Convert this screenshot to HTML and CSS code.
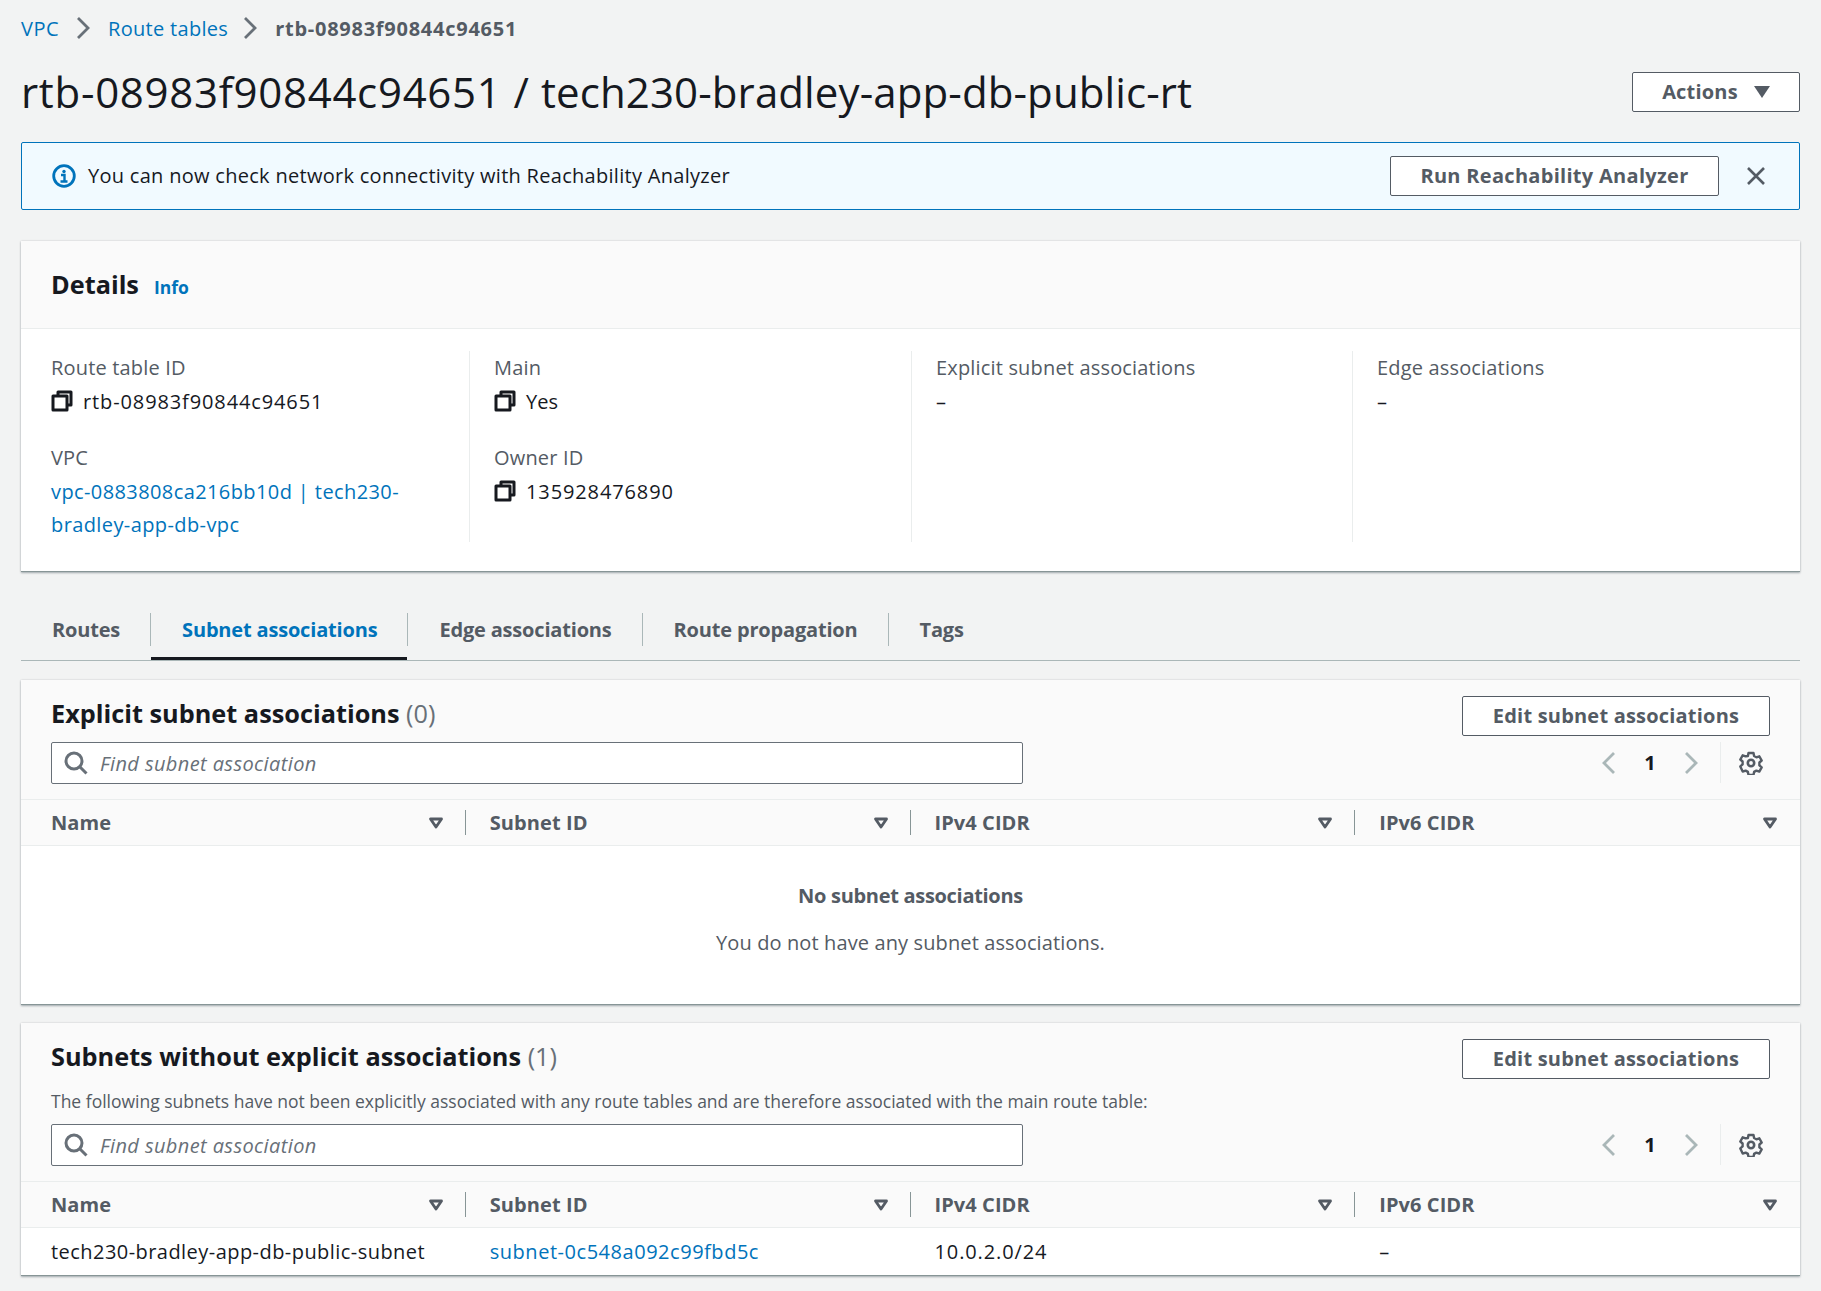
FILE: index.html
```html
<!doctype html>
<html>
  <head>
    <meta charset="utf-8">
    <title>rtb-08983f90844c94651</title>
    <link rel="stylesheet" href="styles.css">
  </head>
  <body>
    <svg class="defs" width="0" height="0">
      <symbol id="copy" viewBox="0 0 22 22"><path d="M7 5V2h13v13h-4M2 6h14v14H2z" fill="none" stroke="currentColor" stroke-width="3" stroke-linejoin="round"/></symbol>
      <symbol id="chev" viewBox="0 0 16 24"><path d="M3 2l10 10L3 22" fill="none" stroke="currentColor" stroke-width="2.800"/></symbol>
      <symbol id="sort" viewBox="0 0 16 12"><path d="M2.500 2h11L8 10z" fill="none" stroke="currentColor" stroke-width="2.800" stroke-linejoin="round"/></symbol>
      <symbol id="search" viewBox="0 0 24 24"><circle cx="10" cy="10" r="8" fill="none" stroke="currentColor" stroke-width="3"/><path d="M15.500 15.500L22.500 22.500" stroke="currentColor" stroke-width="3"/></symbol>
      <symbol id="gear" viewBox="0 0 24 24"><path d="M9.500 2h5l.6 3 2.300 1.300 2.900-1 2.400 4.200-2.300 2v2.900l2.300 2-2.400 4.200-2.900-1-2.300 1.300-.6 3h-5l-.6-3-2.300-1.300-2.900 1L1.300 15.400l2.300-2v-2.900l-2.300-2L3.700 4.300l2.900 1L8.900 5z" fill="none" stroke="currentColor" stroke-width="2.400" stroke-linejoin="round"/><circle cx="12" cy="12" r="3.200" fill="none" stroke="currentColor" stroke-width="2.600"/></symbol>
    </svg>

    <nav class="crumbs">
      <a href="#" class="crumb-vpc">VPC</a>
      <svg class="crumb-sep"><use href="#chev"/></svg>
      <a href="#" class="crumb-link">Route tables</a>
      <svg class="crumb-sep"><use href="#chev"/></svg>
      <span class="crumb-current">rtb-08983f90844c94651</span>
    </nav>

    <header class="page-head">
      <h1><span class="title-id">rtb-08983f90844c94651</span> / tech230-bradley-app-db-public-rt</h1>
      <button class="btn btn-actions">Actions <svg viewBox="0 0 16 12"><path d="M0 0h16L8 12z" fill="currentColor"/></svg></button>
    </header>

    <div class="alert">
      <svg class="alert-icon" viewBox="0 0 24 24"><circle cx="12" cy="12" r="10.300" fill="none" stroke="currentColor" stroke-width="2.800"/><circle cx="12" cy="7.500" r="1.700" fill="currentColor"/><path d="M9 11h3.500v6M8.500 17.500h7" fill="none" stroke="currentColor" stroke-width="2.400"/></svg>
      <span class="alert-text">You can now check network connectivity with Reachability Analyzer</span>
      <button class="btn btn-run">Run Reachability Analyzer</button>
      <svg class="alert-close" viewBox="0 0 20 20"><path d="M2 2l16 16M18 2L2 18" stroke="currentColor" stroke-width="2.600"/></svg>
    </div>

    <section class="card details">
      <div class="details-head"><h2>Details</h2><a href="#" class="info">Info</a></div>
      <div class="details-grid">
        <div class="col col-first">
          <div class="label">Route table ID</div>
          <div class="value"><svg class="copy"><use href="#copy"/></svg><span class="id">rtb-08983f90844c94651</span></div>
          <div class="label label-next">VPC</div>
          <div class="value"><a href="#" class="vpc-link">vpc-0883808ca216bb10d | tech230-bradley-app-db-vpc</a></div>
        </div>
        <div class="col">
          <div class="label">Main</div>
          <div class="value"><svg class="copy"><use href="#copy"/></svg>Yes</div>
          <div class="label label-next">Owner ID</div>
          <div class="value"><svg class="copy"><use href="#copy"/></svg><span class="id">135928476890</span></div>
        </div>
        <div class="col">
          <div class="label">Explicit subnet associations</div>
          <div class="value">–</div>
        </div>
        <div class="col">
          <div class="label">Edge associations</div>
          <div class="value">–</div>
        </div>
      </div>
    </section>

    <div class="tabs">
      <a class="tab" href="#">Routes</a>
      <a class="tab tab-active" href="#">Subnet associations</a>
      <a class="tab" href="#">Edge associations</a>
      <a class="tab" href="#">Route propagation</a>
      <a class="tab" href="#">Tags</a>
    </div>

    <section class="card assoc assoc-explicit">
      <div class="assoc-head">
        <div class="assoc-left">
          <h2>Explicit subnet associations <span class="count">(0)</span></h2>
          <div class="search"><svg><use href="#search"/></svg><span>Find subnet association</span></div>
        </div>
        <div class="assoc-right">
          <button class="btn btn-edit">Edit subnet associations</button>
          <div class="pager">
            <svg class="prev"><use href="#chev"/></svg>
            <span class="page-num">1</span>
            <svg class="next"><use href="#chev"/></svg>
            <span class="pager-sep"></span>
            <svg class="gear"><use href="#gear"/></svg>
          </div>
        </div>
      </div>
      <div class="thead">
        <div class="th">Name<svg><use href="#sort"/></svg></div>
        <div class="th">Subnet ID<svg><use href="#sort"/></svg></div>
        <div class="th">IPv4 CIDR<svg><use href="#sort"/></svg></div>
        <div class="th">IPv6 CIDR<svg><use href="#sort"/></svg></div>
      </div>
      <div class="empty">
        <strong>No subnet associations</strong>
        <p>You do not have any subnet associations.</p>
      </div>
    </section>

    <section class="card assoc assoc-implicit">
      <div class="assoc-head">
        <div class="assoc-left">
          <h2>Subnets without explicit associations <span class="count">(1)</span></h2>
          <p class="desc">The following subnets have not been explicitly associated with any route tables and are therefore associated with the main route table:</p>
          <div class="search"><svg><use href="#search"/></svg><span>Find subnet association</span></div>
        </div>
        <div class="assoc-right">
          <button class="btn btn-edit">Edit subnet associations</button>
          <div class="pager">
            <svg class="prev"><use href="#chev"/></svg>
            <span class="page-num">1</span>
            <svg class="next"><use href="#chev"/></svg>
            <span class="pager-sep"></span>
            <svg class="gear"><use href="#gear"/></svg>
          </div>
        </div>
      </div>
      <div class="thead">
        <div class="th">Name<svg><use href="#sort"/></svg></div>
        <div class="th">Subnet ID<svg><use href="#sort"/></svg></div>
        <div class="th">IPv4 CIDR<svg><use href="#sort"/></svg></div>
        <div class="th">IPv6 CIDR<svg><use href="#sort"/></svg></div>
      </div>
      <div class="tr">
        <div class="td td-name">tech230-bradley-app-db-public-subnet</div>
        <div class="td"><a href="#" class="subnet-link">subnet-0c548a092c99fbd5c</a></div>
        <div class="td id">10.0.2.0/24</div>
        <div class="td">–</div>
      </div>
    </section>
  </body>
</html>
```

FILE: styles.css
```css
* { box-sizing: border-box; }
html, body { margin: 0; }
body {
  background: #f2f3f3;
  color: #16191f;
  font-family: "Open Sans", "Noto Sans", sans-serif;
  font-size: 20px;
  line-height: 33px;
  padding: 11px 21px 16px;
}
a { color: #0073bb; text-decoration: none; }
h1, h2, p { margin: 0; }
.defs { position: absolute; }
.id { letter-spacing: .88px; }

/* breadcrumbs */
.crumbs { display: flex; align-items: center; height: 34px; }
.crumb-vpc { letter-spacing: .5px; }
.crumb-link { letter-spacing: .3px; margin-right: -2px; }
.crumb-sep { width: 16px; height: 24px; margin: 0 17px 0 16px; color: #687078; }
.crumb-current { color: #545b64; font-weight: 700; letter-spacing: .74px; }

/* page title */
.page-head { display: flex; justify-content: space-between; align-items: center; margin-top: 27px; height: 40px; }
h1 { font-size: 42px; font-weight: 400; line-height: 48px; letter-spacing: .1px; word-spacing: 1px; }
.title-id { letter-spacing: .7px; }
.btn {
  background: #fff;
  border: 1px solid #545b64;
  border-radius: 2px;
  color: #545b64;
  font: 700 20px/1 "Open Sans", "Noto Sans", sans-serif;
  letter-spacing: .2px;
  height: 40px;
  padding: 0;
}
.btn-actions { width: 168px; display: flex; align-items: center; justify-content: center; gap: 16px; }
.btn-actions svg { width: 16px; height: 12px; }

/* alert */
.alert {
  display: flex;
  align-items: center;
  height: 68px;
  margin-top: 30px;
  padding: 0 30px 1px;
  background: #f1faff;
  border: 1px solid #0073bb;
  border-radius: 2px;
}
.alert-icon { width: 24px; height: 24px; color: #0073bb; margin-right: 12px; }
.alert-text { flex: 1; letter-spacing: .29px; }
.btn-run { width: 329px; letter-spacing: .3px; }
.alert-close { width: 20px; height: 20px; margin: 0 3px 0 27px; color: #545b64; }

/* cards */
.card { background: #fff; border-bottom: 1px solid #879596; box-shadow: 0 1px 2px rgba(0, 28, 36, .3), 0 0 2px rgba(0, 28, 36, .12); }

.details { margin-top: 31px; height: 331px; }
.details-head { display: flex; align-items: baseline; gap: 15px; height: 88px; padding: 27px 30px 0; background: #fafafa; border-bottom: 1px solid #eaeded; }
.details-head h2 { font-size: 25.300px; font-weight: 700; }
.info { font-size: 17.500px; font-weight: 700; }
.details-grid { display: grid; grid-template-columns: 440px 442px 441px 441px; padding: 22px 0 0 8px; }
.col { height: 191px; padding: 0 24px; border-left: 1px solid #eaeded; }
.col-first { padding-left: 22px; border-left: 0; }
.label { color: #545b64; letter-spacing: .17px; }
.label-next { margin-top: 23px; }
.value { margin-top: 1px; }
.vpc-link { letter-spacing: .4px; }
.copy { width: 22px; height: 22px; margin-right: 10px; vertical-align: -3px; }

/* tabs */
.tabs { display: flex; align-items: center; margin-top: 18px; height: 71px; padding-top: 9px; border-bottom: 1px solid #aab7b8; }
.tab { position: relative; height: 33px; padding: 0 30px 0 31px; color: #545b64; font-weight: 700; letter-spacing: -.18px; border-right: 1px solid #aab7b8; }
.tab:last-child { border-right: 0; }
.tab-active { color: #0073bb; }
.tab-active::after { content: ""; position: absolute; left: 0; right: 0; bottom: -14px; height: 3px; background: #16191f; }

/* subnet tables */
.assoc { margin-top: 19px; }
.assoc-implicit { margin-top: 18px; }
.assoc-head { display: flex; justify-content: space-between; background: #fafafa; padding: 16px 30px 15px; }
.assoc-head h2 { font-size: 25.300px; font-weight: 700; line-height: 34px; }
.count { color: #687078; font-weight: 400; }
.desc { color: #545b64; font-size: 17.500px; line-height: 26px; margin-top: 15px; }
.search { display: flex; align-items: center; width: 972px; height: 42px; margin-top: 12px; padding-left: 12px; background: #fff; border: 1px solid #687078; border-radius: 2px; color: #687078; font-style: italic; letter-spacing: .4px; }
.assoc-implicit .search { margin-top: 10px; }
.search svg { width: 24px; height: 24px; margin-right: 12px; }
.assoc-right { display: flex; flex-direction: column; align-items: flex-end; }
.btn-edit { width: 308px; }
.pager { display: flex; align-items: center; height: 41px; margin-top: auto; margin-bottom: 1px; padding-right: 7px; color: #aab7b8; }
.pager svg { width: 16px; height: 24px; }
.prev { transform: scaleX(-1); }
.page-num { width: 66px; text-align: center; color: #16191f; font-weight: 700; }
.pager-sep { width: 1px; height: 41px; margin: 0 18px 0 21px; background: #eaeded; }
.pager .gear { width: 24px; height: 24px; color: #545b64; }

.thead, .tr { display: grid; grid-template-columns: repeat(4, 1fr); }
.thead { height: 47px; background: #fafafa; border-top: 1px solid #eaeded; border-bottom: 1px solid #eaeded; align-items: center; }
.th { display: flex; justify-content: space-between; align-items: center; height: 25px; padding: 0 21px 0 24px; color: #545b64; font-weight: 700; letter-spacing: .08px; border-right: 1px solid #879596; }
.th:first-child, .td:first-child { padding-left: 30px; }
.th:last-child { border-right: 0; padding-right: 22px; }
.th svg { width: 16px; height: 12px; }
.tr { height: 47px; align-items: center; }
.td { padding-left: 24px; }
.td-name { letter-spacing: .45px; }
.subnet-link { letter-spacing: .53px; }

.empty { height: 158px; padding-top: 33px; text-align: center; color: #545b64; }
.empty strong { display: block; font-weight: 700; letter-spacing: -.3px; }
.empty p { margin-top: 14px; letter-spacing: .12px; }
```
